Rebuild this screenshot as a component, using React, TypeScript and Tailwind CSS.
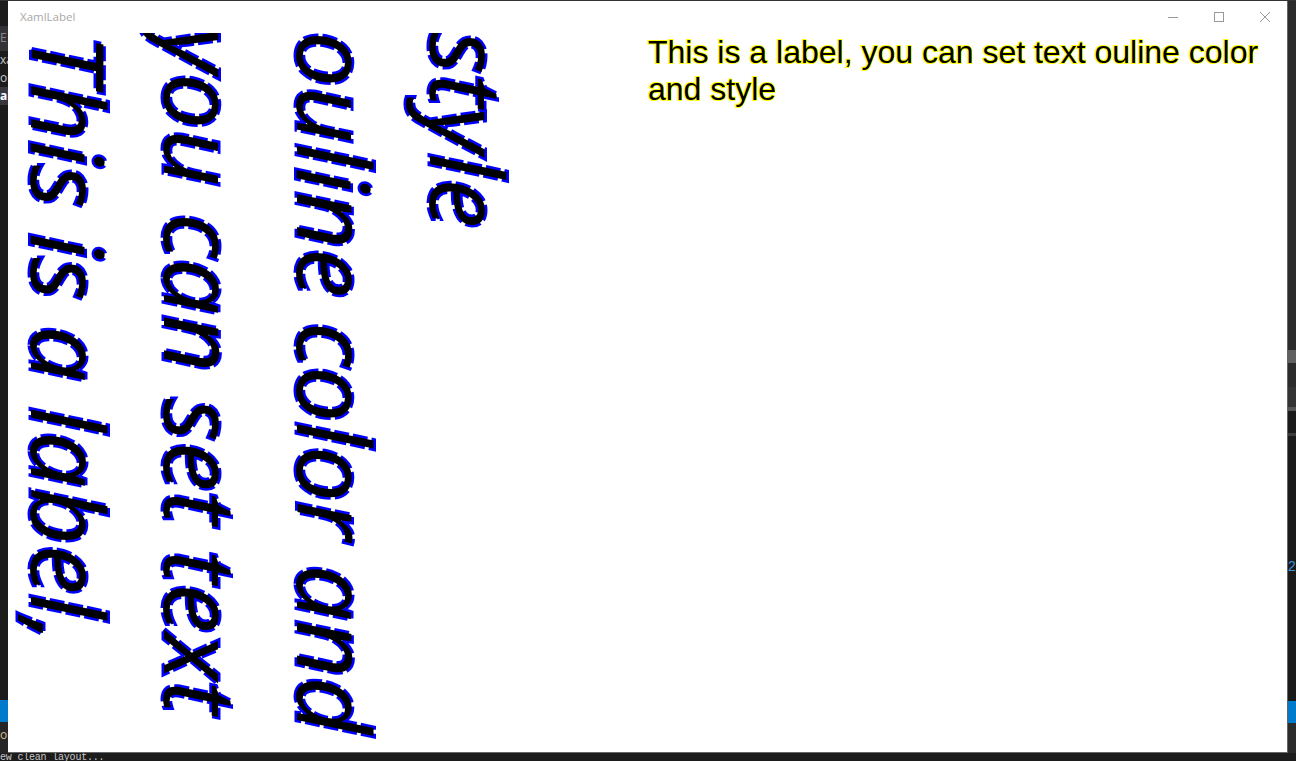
const F = '"Liberation Sans", Arial, sans-serif';

function Line({ text, x, y, spacing = 0 }: { text: string; x: number; y: number; spacing?: number }) {
  return (
    <text
      transform={`translate(${x} ${y}) rotate(90)`}
      fontFamily='"Open Sans", sans-serif'
      fontStyle="italic"
      fontSize={100}
      letterSpacing={spacing}
      fill="#000"
      stroke="#0000ff"
      strokeWidth={5}
      strokeDasharray="15 4"
      style={{ paintOrder: 'stroke fill' }}
    >
      {text}
    </text>
  );
}

function Gutter({ side }: { side: 'left' | 'right' }) {
  if (side === 'left') {
    return (
      <div className="w-[8px] h-[752px] shrink-0 overflow-hidden flex flex-col text-[12px] leading-[18px] text-[#c8c8c8] whitespace-pre" style={{ fontFamily: '"Open Sans", sans-serif' }}>
        <div className="h-[25px] shrink-0" />
        <div className="h-[25px] shrink-0 bg-[#333337] text-[#888] leading-[24px]">E</div>
        <div className="h-[18px] shrink-0">xa</div>
        <div className="h-[18px] shrink-0">on</div>
        <div className="h-[18px] shrink-0 bg-[#37373d] text-white font-bold">al</div>
        <div className="h-[595px] shrink-0" />
        <div className="h-[22px] shrink-0 bg-[#007acc]" />
        <div className="h-[31px] shrink-0 bg-[#252526] pt-[4px] text-[#d7ba7d]">or</div>
      </div>
    );
  }
  return (
    <div className="w-[8px] h-[752px] shrink-0 overflow-hidden flex flex-col bg-[#1a1a1a]">
      <div className="h-[349px] shrink-0 bg-[#2b2b2b]" />
      <div className="h-[13px] shrink-0 bg-[#606060]" />
      <div className="h-[24px] shrink-0 bg-[#2b2b2b]" />
      <div className="h-[20px] shrink-0 bg-[#333333]" />
      <div className="h-[4px] shrink-0 bg-[#555555]" />
      <div className="h-[22px] shrink-0 bg-[#1a1a1a]" />
      <div className="h-[3px] shrink-0 bg-[#3c3c3c]" />
      <div className="h-[122px] shrink-0" />
      <div className="h-[16px] shrink-0 text-[14px] leading-[16px] text-[#3a96dd]" style={{ fontFamily: F }}>2</div>
      <div className="h-[127px] shrink-0" />
      <div className="h-[22px] shrink-0 bg-[#007acc]" />
      <div className="flex-1 bg-[#2b2b2b]" />
    </div>
  );
}

export default function App() {
  return (
    <div className="w-[1296px] h-[761px] overflow-hidden bg-[#1c1c1c] flex flex-col">
      <div className="h-[1px] shrink-0 bg-[#333333]" />
      <div className="flex h-[752px] shrink-0">
        <Gutter side="left" />
        <div className="w-[1280px] h-[752px] shrink-0 bg-white flex flex-col border-r border-b border-[#666666]">
          <div className="h-[32px] shrink-0 flex items-center pl-[12px] pr-[17px]">
            <span className="flex-1 text-[11.5px] text-[#a8a8a8]" style={{ fontFamily: '"Open Sans", sans-serif' }}>XamlLabel</span>
            <div className="flex items-center gap-[36px] text-[#999999]">
              <svg width="10" height="10" viewBox="0 0 10 10" fill="none" stroke="currentColor"><path d="M0 5.5H10" /></svg>
              <svg width="10" height="10" viewBox="0 0 10 10" fill="none" stroke="currentColor"><rect x="0.5" y="0.5" width="9" height="9" /></svg>
              <svg width="10" height="10" viewBox="0 0 10 10" fill="none" stroke="currentColor"><path d="M0 0L10 10M10 0L0 10" /></svg>
            </div>
          </div>
          <div className="flex flex-1 min-h-0">
            <svg width="640" height="719" className="shrink-0 block">
              <Line text="This is a label," x={23} y={1} spacing={-0.6} />
              <Line text="you can set text" x={156} y={-6} />
              <Line text="ouline color and" x={289} y={-2} spacing={-1} />
              <Line text="style" x={422} y={-2} />
            </svg>
            <div className="pt-[1px] text-[32px] leading-[37px] text-black w-[620px] [-webkit-text-stroke:2px_#ffff00] [paint-order:stroke_fill]" style={{ fontFamily: F }}>
              This is a label, you can set text ouline color and style
            </div>
          </div>
        </div>
        <Gutter side="right" />
      </div>
      <div className="h-[8px] shrink-0 overflow-hidden text-[10px] tracking-[-0.2px] leading-[9px] text-[#c8c8c8] whitespace-pre" style={{ fontFamily: '"Liberation Mono", monospace' }}>ew clean layout...</div>
    </div>
  );
}
